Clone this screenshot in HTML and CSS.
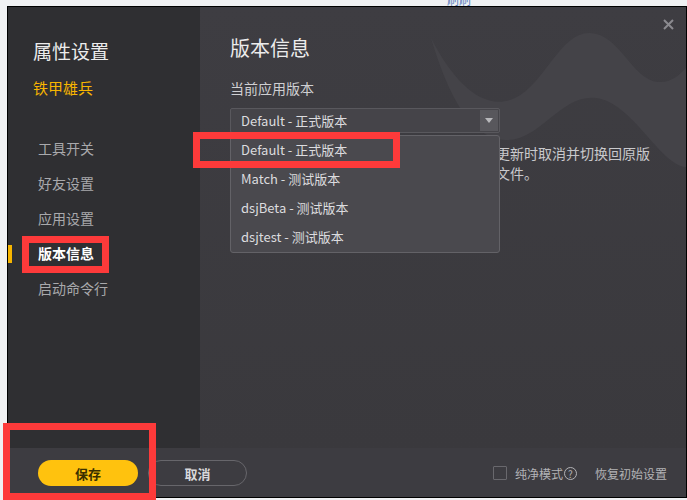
FILE: index.html
```html
<!DOCTYPE html>
<html lang="zh-CN">
<head>
    <meta charset="UTF-8">
    <title>属性设置</title>
    <link rel="stylesheet" href="styles.css">
</head>
<body>
    <div class="topnote"><span>刷刷</span></div>

    <div class="window">
        <div class="content">
            <div class="sidebar">
                <div class="side-title">属性设置</div>
                <div class="side-game">铁甲雄兵</div>
                <ul class="nav">
                    <li>工具开关</li>
                    <li>好友设置</li>
                    <li>应用设置</li>
                    <li class="active">版本信息</li>
                    <li>启动命令行</li>
                </ul>
            </div>

            <div class="main">
                <svg class="wave" width="486" height="441" viewBox="0 0 486 441">
                    <g transform="translate(-200 -7)">
                        <path d="M431,38 C455,85 485,112 515,98 C545,84 560,32 590,33 C620,34 632,80 658,82 C672,83 680,74 686,68 L686,167 C660,165 632,102 596,98 C560,94 540,142 505,140 C470,138 448,95 431,38 Z" fill="#444348"/>
                    </g>
                </svg>

                <svg class="close" width="11" height="11" viewBox="0 0 11 11">
                    <path d="M1,1 L10,10 M10,1 L1,10" stroke="#8b8a8f" stroke-width="2"/>
                </svg>

                <h2 class="title">版本信息</h2>
                <div class="label">当前应用版本</div>

                <div class="select">
                    <span>Default - 正式版本</span>
                    <span class="arrow"></span>
                </div>

                <p class="desc">测试版本可能存在不稳定的情况，您可以在更新时取消并切换回原版<br>本。如遇问题请联系客服获取最新版本安装文件。</p>

                <ul class="dropdown">
                    <li>Default - 正式版本</li>
                    <li>Match - 测试版本</li>
                    <li>dsjBeta - 测试版本</li>
                    <li>dsjtest - 测试版本</li>
                </ul>
            </div>
        </div>

        <div class="footer">
            <button class="btn btn-save">保存</button>
            <button class="btn btn-cancel">取消</button>
            <div class="footer-right">
                <label class="pure"><span class="checkbox"></span>纯净模式<span class="help">?</span></label>
                <a class="reset">恢复初始设置</a>
            </div>
        </div>
    </div>

    <div class="mark mark-nav"></div>
    <div class="mark mark-item"></div>
    <div class="mark mark-save"></div>
</body>
</html>
```

FILE: styles.css
```css
body {
    margin: 0;
    background-color: #f0f1f3;
    font-family: "Noto Sans CJK SC", "Noto Sans", sans-serif;
    position: relative;
    height: 500px;
    overflow: hidden;
}
ul {
    list-style: none;
    margin: 0;
    padding: 0;
}
.topnote {
    height: 6px;
    overflow: hidden;
    padding-left: 447px;
}
.topnote span {
    display: block;
    margin-top: -7px;
    font-size: 12px;
    line-height: 13px;
    color: #5a80bd;
}
.window {
    margin-left: 7px;
    width: 680px;
    height: 492px;
    border: 1px solid #000;
    box-sizing: border-box;
    display: flex;
    flex-direction: column;
}
.content {
    height: 441px;
    display: flex;
}
.sidebar {
    width: 192px;
    background-color: #2f2f32;
    padding: 32px 0 0 0;
    box-sizing: border-box;
}
.side-title {
    padding-left: 25px;
    font-size: 19px;
    line-height: 24px;
    color: #ececec;
}
.side-game {
    padding-left: 25px;
    margin-top: 15px;
    font-size: 15px;
    line-height: 20px;
    color: #f7b500;
}
.nav {
    margin-top: 33px;
}
.nav li {
    position: relative;
    padding-left: 30px;
    font-size: 14px;
    line-height: 35px;
    color: #a9a9ac;
}
.nav li.active {
    color: #ffffff;
    font-weight: bold;
}
.nav li.active::before {
    content: "";
    position: absolute;
    left: 0;
    top: 9px;
    width: 4px;
    height: 18px;
    background-color: #f7b500;
}
.main {
    flex: 1;
    position: relative;
    background: linear-gradient(#3e3d42, #3a393d);
    padding: 28px 0 0 30px;
}
.wave {
    position: absolute;
    left: 0;
    top: 0;
}
.close {
    position: absolute;
    left: 463px;
    top: 12px;
}
.title {
    position: relative;
    margin: 0;
    font-size: 20px;
    font-weight: normal;
    line-height: 26px;
    color: #ececec;
}
.label {
    position: relative;
    margin-top: 17px;
    font-size: 14px;
    line-height: 20px;
    color: #cfcfd2;
}
.select {
    position: relative;
    margin-top: 10px;
    width: 270px;
    height: 25px;
    box-sizing: border-box;
    border: 1px solid #59585d;
    border-radius: 2px;
    background-color: #454449;
    display: flex;
    justify-content: space-between;
    align-items: center;
    padding: 0 1px 0 10px;
    font-size: 13px;
    color: #dcdcdf;
}
.arrow {
    width: 18px;
    height: 21px;
    background-color: #58575c;
    position: relative;
}
.arrow::after {
    content: "";
    position: absolute;
    left: 5px;
    top: 8px;
    border-left: 4px solid transparent;
    border-right: 4px solid transparent;
    border-top: 5px solid #b8b8bb;
}
.desc {
    position: relative;
    margin: 10px 0 0 0;
    font-size: 14px;
    line-height: 20px;
    color: #c9c9cc;
    white-space: nowrap;
}
.dropdown {
    position: absolute;
    left: 30px;
    top: 128px;
    width: 270px;
    height: 118px;
    box-sizing: border-box;
    border: 1px solid #636267;
    border-radius: 3px;
    background-color: #4a494e;
}
.dropdown li {
    height: 29px;
    line-height: 27px;
    padding-left: 10px;
    font-size: 13px;
    color: #dcdcdf;
}
.footer {
    flex: 1;
    background-color: #3d3c41;
    display: flex;
    align-items: flex-start;
    padding: 12px 19px 0 30px;
}
.btn {
    height: 26px;
    width: 100px;
    border-radius: 13px;
    font-family: inherit;
    font-size: 13px;
    font-weight: bold;
    padding: 0;
    cursor: pointer;
}
.btn-save {
    background-color: #ffc20e;
    border: none;
    color: #3a3000;
}
.btn-cancel {
    margin-left: 10px;
    width: 99px;
    background-color: transparent;
    border: 1px solid #67666b;
    color: #d8d8db;
}
.footer-right {
    margin-left: auto;
    display: flex;
    align-items: center;
    height: 26px;
    font-size: 12px;
    color: #b3b3b6;
}
.pure {
    display: flex;
    align-items: center;
}
.checkbox {
    width: 14px;
    height: 14px;
    box-sizing: border-box;
    border: 1px solid #69686d;
    border-radius: 1px;
    margin-right: 8px;
}
.help {
    width: 11px;
    height: 11px;
    border: 1px solid #b3b3b6;
    border-radius: 50%;
    font-size: 10px;
    line-height: 11px;
    text-align: center;
    margin-left: 1px;
}
.reset {
    margin-left: 18px;
}
.mark {
    position: absolute;
    border: 7px solid #fd3a3a;
    box-sizing: border-box;
}
.mark-nav {
    left: 22px;
    top: 236px;
    width: 87px;
    height: 37px;
}
.mark-item {
    left: 193px;
    top: 132px;
    width: 207px;
    height: 36px;
}
.mark-save {
    left: 3px;
    top: 423px;
    width: 153px;
    height: 77px;
}
```
